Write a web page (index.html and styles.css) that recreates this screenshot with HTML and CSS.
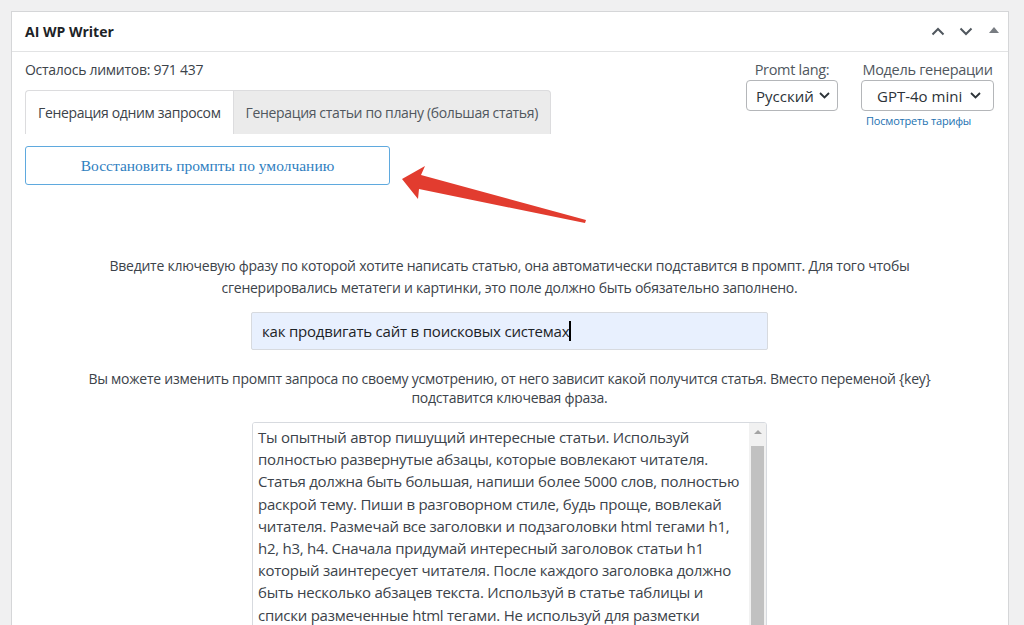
FILE: index.html
```html
<!DOCTYPE html>
<html lang="ru">
<head>
  <meta charset="UTF-8">
  <meta name="viewport" content="width=device-width, initial-scale=1.0">
  <title>AI WP Writer</title>
  <link rel="stylesheet" href="styles.css">
</head>
<body>
  <div class="postbox">
    <div class="postbox-header">
      <h2 class="postbox-title">AI WP Writer</h2>
      <div class="handle-actions">
        <button class="handle-btn" aria-label="Вверх">
          <svg width="14" height="9" viewBox="0 0 14 9"><path d="M1.5 7.5 L7 2 L12.5 7.5" fill="none" stroke="#50575e" stroke-width="2"/></svg>
        </button>
        <button class="handle-btn" aria-label="Вниз">
          <svg width="14" height="9" viewBox="0 0 14 9"><path d="M1.5 1.5 L7 7 L12.5 1.5" fill="none" stroke="#50575e" stroke-width="2"/></svg>
        </button>
        <button class="handle-btn toggle" aria-label="Свернуть">
          <svg width="10" height="6" viewBox="0 0 10 6"><path d="M0 6 L5 0 L10 6 Z" fill="#787c82"/></svg>
        </button>
      </div>
    </div>

    <div class="inside">
      <div class="top-row">
        <div class="top-left">
          <div class="limits">Осталось лимитов: 971 437</div>
          <div class="tabs">
            <div class="tab active">Генерация одним запросом</div>
            <div class="tab">Генерация статьи по плану (большая статья)</div>
          </div>
        </div>
        <div class="top-right">
          <div class="field">
            <label class="field-label">Promt lang:</label>
            <div class="select lang">
              <span>Русский</span>
              <svg width="11" height="7" viewBox="0 0 11 7"><path d="M1 1 L5.5 5.5 L10 1" fill="none" stroke="#2c3338" stroke-width="1.8"/></svg>
            </div>
          </div>
          <div class="field">
            <label class="field-label">Модель генерации</label>
            <div class="select model">
              <span>GPT-4o mini</span>
              <svg width="11" height="7" viewBox="0 0 11 7"><path d="M1 1 L5.5 5.5 L10 1" fill="none" stroke="#2c3338" stroke-width="1.8"/></svg>
            </div>
            <a class="rates-link" href="#">Посмотреть тарифы</a>
          </div>
        </div>
      </div>

      <div class="restore-row">
        <button class="restore-btn">Восстановить промпты по умолчанию</button>
        <svg class="annotation-arrow" width="200" height="64" viewBox="0 0 200 64">
          <path d="M3 15 L26 2 L22 11 L187 56 L186 59 L20 25 L19 35 Z" fill="#e23c2f"/>
        </svg>
      </div>

      <div class="generator">
        <p class="hint">Введите ключевую фразу по которой хотите написать статью, она автоматически подставится в промпт. Для того чтобы сгенерировались метатеги и картинки, это поле должно быть обязательно заполнено.</p>
        <div class="keyword">как продвигать сайт в поисковых системах<span class="caret"></span></div>
        <p class="hint second">Вы можете изменить промпт запроса по своему усмотрению, от него зависит какой получится статья. Вместо переменой {key} подставится ключевая фраза.</p>
        <div class="prompt-box">
          <textarea class="prompt">Ты опытный автор пишущий интересные статьи. Используй
полностью развернутые абзацы, которые вовлекают читателя.
Статья должна быть большая, напиши более 5000 слов, полностью
раскрой тему. Пиши в разговорном стиле, будь проще, вовлекай
читателя. Размечай все заголовки и подзаголовки html тегами h1,
h2, h3, h4. Сначала придумай интересный заголовок статьи h1
который заинтересует читателя. После каждого заголовка должно
быть несколько абзацев текста. Используй в статье таблицы и
списки размеченные html тегами. Не используй для разметки
markdown. Напиши статью на тему: {key}</textarea>
          <div class="scrollbar">
            <div class="scroll-arrow"></div>
            <div class="scroll-thumb"></div>
          </div>
        </div>
      </div>
    </div>
  </div>
</body>
</html>
```

FILE: styles.css
```css
body {
  margin: 0;
  padding: 11px 15px 0 11px;
  background: #f0f0f1;
  font-family: "Open Sans", "Noto Sans", sans-serif;
  font-size: 14px;
  color: #3c434a;
  height: 625px;
  box-sizing: border-box;
  overflow: hidden;
}
.postbox {
  background: #fff;
  border: 1px solid #d5d6d8;
  height: 640px;
}
.postbox-header {
  display: flex;
  justify-content: space-between;
  align-items: center;
  height: 39px;
  border-bottom: 1px solid #e2e3e4;
  padding: 0 0 0 13px;
}
.postbox-title {
  margin: 0;
  font-size: 14px;
  font-weight: 700;
  color: #1d2327;
}
.handle-actions {
  display: flex;
  align-items: center;
}
.handle-btn {
  background: none;
  border: none;
  padding: 0;
  width: 28px;
  height: 36px;
  display: flex;
  align-items: center;
  justify-content: center;
}
.handle-btn.toggle {
  padding-bottom: 4px;
}
.inside {
  padding: 8px 14px 0 13px;
}
.top-row {
  display: flex;
  justify-content: space-between;
}
.limits {
  line-height: 20px;
  margin-bottom: 10px;
  letter-spacing: -0.28px;
}
.tabs {
  display: flex;
  height: 44px;
}
.tab {
  display: flex;
  align-items: center;
  padding: 0 12px;
  border: 1px solid #dcdcde;
  border-bottom: none;
  border-radius: 4px 4px 0 0;
  background: #ebebeb;
  color: #50575e;
  white-space: nowrap;
  letter-spacing: -0.35px;
}
.tab.active {
  background: #fff;
  border-right: none;
  border-radius: 4px 0 0 0;
  color: #3c434a;
}
.tab + .tab {
  border-radius: 0 4px 0 0;
}
.top-right {
  display: flex;
  gap: 23px;
}
.field {
  display: flex;
  flex-direction: column;
  align-items: center;
}
.field-label {
  font-size: 14.5px;
  line-height: 20px;
  letter-spacing: -0.3px;
  color: #50575e;
}
.select {
  display: flex;
  align-items: center;
  justify-content: space-between;
  height: 29px;
  border: 1px solid #b4b6b9;
  border-radius: 4px;
  font-size: 15px;
  color: #2c3338;
  white-space: nowrap;
  box-sizing: content-box;
}
.select svg {
  flex-shrink: 0;
}
.select.lang {
  width: 74px;
  padding: 0 7px 0 9px;
}
.select.model {
  width: 104px;
  padding: 0 12px 0 15px;
}
.rates-link {
  align-self: flex-start;
  margin: 2px 0 0 5px;
  font-size: 11px;
  letter-spacing: -0.2px;
  color: #2271b1;
  text-decoration: none;
}
.restore-row {
  margin-top: 12px;
  position: relative;
}
.restore-btn {
  width: 365px;
  height: 39px;
  background: #fff;
  border: 1px solid #5fa9de;
  border-radius: 3px;
  font-family: "Liberation Serif", "Times New Roman", serif;
  font-size: 15.5px;
  color: #2f80bf;
}
.annotation-arrow {
  position: absolute;
  left: 374px;
  top: 18px;
}
.generator {
  display: flex;
  flex-direction: column;
  align-items: center;
  padding-top: 70px;
}
.hint {
  margin: 0;
  max-width: 880px;
  text-align: center;
  line-height: 22px;
  letter-spacing: -0.25px;
  color: #3c434a;
}
.hint.second {
  line-height: 19px;
  margin-top: 19px;
}
.keyword {
  width: 497px;
  height: 36px;
  margin-top: 13px;
  padding: 0 8px 0 10px;
  box-sizing: content-box;
  display: flex;
  align-items: center;
  background: #e8f0fe;
  border: 1px solid #d7dadf;
  border-radius: 2px;
  font-size: 15px;
  letter-spacing: -0.2px;
  color: #1d2327;
}
.caret {
  display: inline-block;
  width: 2px;
  height: 20px;
  background: #000;
}
.prompt-box {
  display: flex;
  width: 513px;
  height: 400px;
  margin-top: 15px;
  border: 1px solid #d7dadf;
  border-radius: 3px;
  overflow: hidden;
}
.prompt {
  flex: 1;
  border: none;
  resize: none;
  overflow: hidden;
  padding: 3px 2px 0 5px;
  font-family: "Open Sans", "Noto Sans", sans-serif;
  font-size: 15px;
  line-height: 22.2px;
  letter-spacing: -0.25px;
  color: #3c434a;
  outline: none;
}
.scrollbar {
  width: 17px;
  display: flex;
  flex-direction: column;
  background: #f1f1f1;
}
.scroll-arrow {
  height: 17px;
  display: flex;
  justify-content: center;
  align-items: center;
}
.scroll-arrow::before {
  content: "";
  border-left: 4px solid transparent;
  border-right: 4px solid transparent;
  border-bottom: 4px solid #a3a3a3;
}
.scroll-thumb {
  flex: 1;
  margin: 6px 2px 0;
  background: #c1c1c1;
}
```
